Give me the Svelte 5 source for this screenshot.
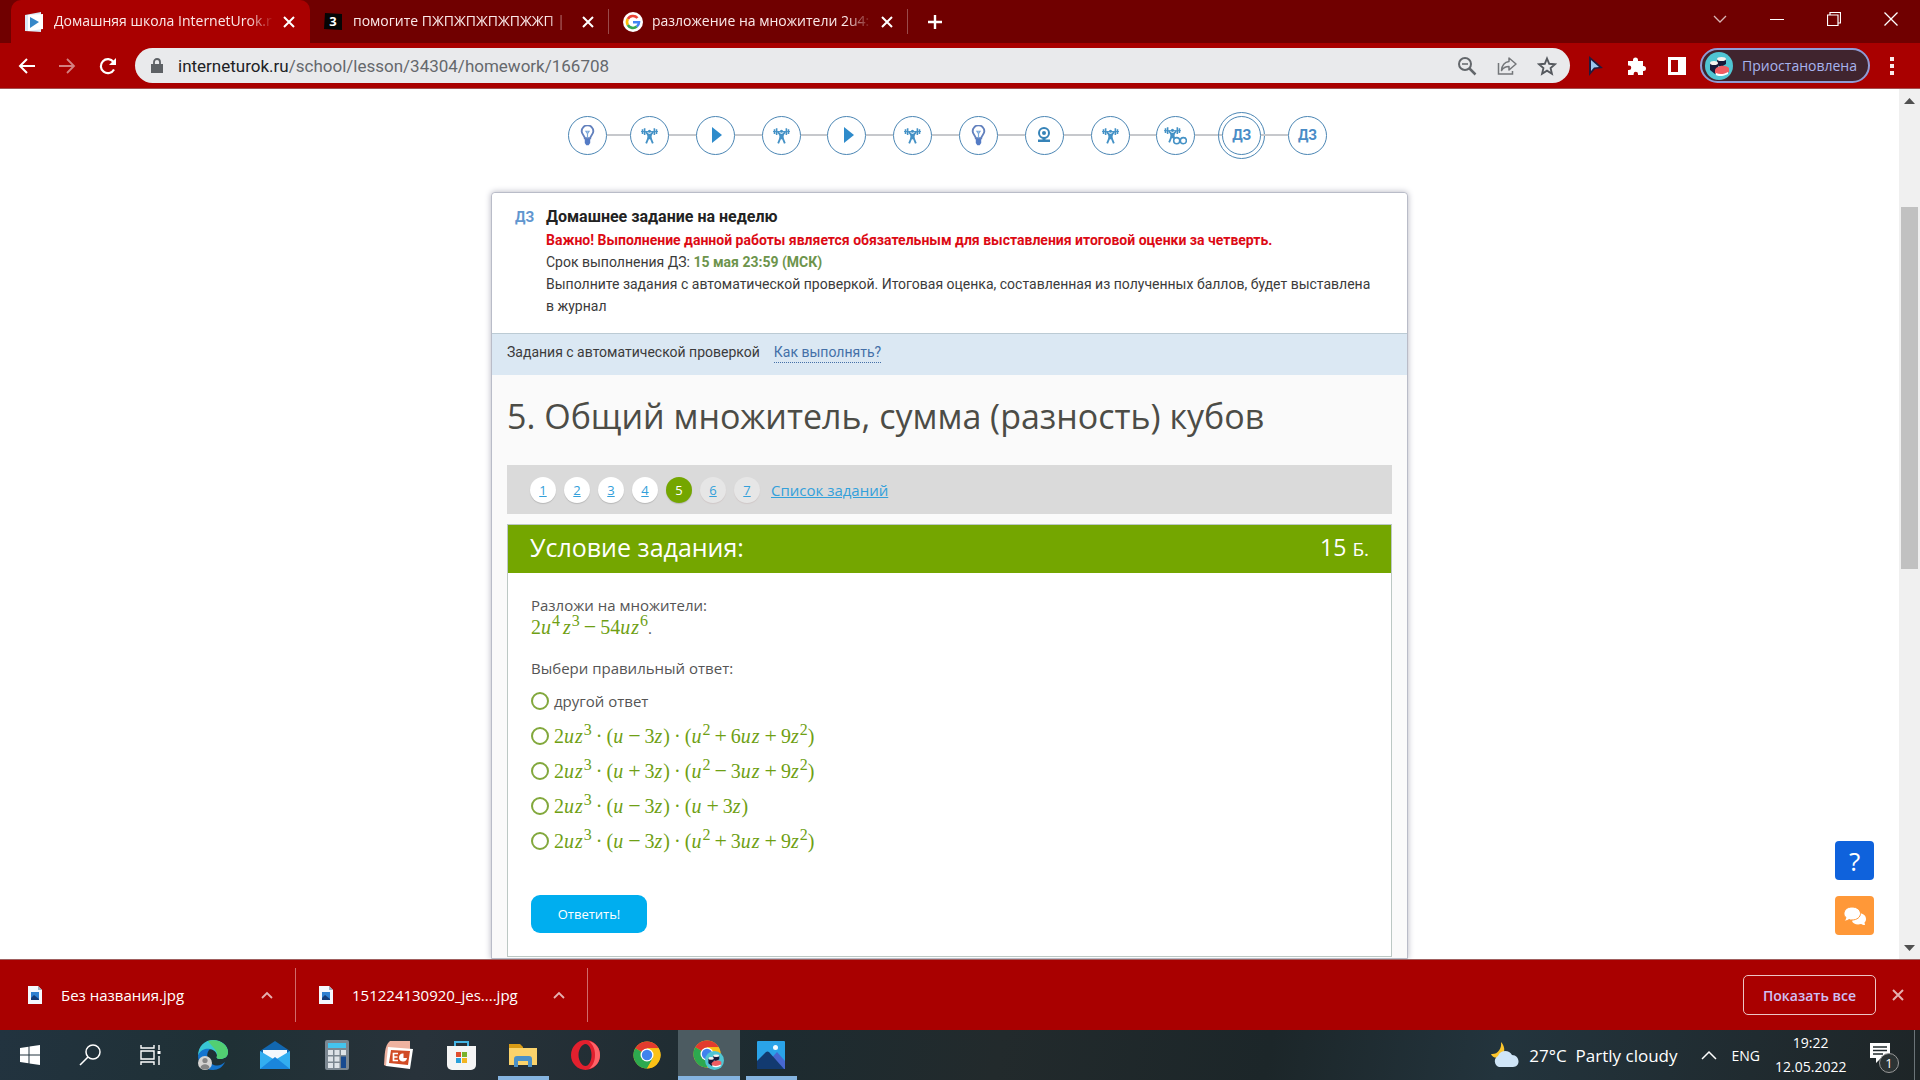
<script>
  const tabs = [
    { title: 'Домашняя школа InternetUrok.r', icon: 'play', active: true },
    { title: 'помогите ПЖПЖПЖПЖПЖЖП |', icon: 'three', active: false },
    { title: 'разложение на множители 2u4:', icon: 'google', active: false }
  ];
  const steps = ['bulb', 'gym', 'play', 'gym', 'play', 'gym', 'bulb', 'cam', 'gym', 'gymloop', 'hw-current', 'hw'];
  const tasks = [
    { n: 1, state: 'open' }, { n: 2, state: 'open' }, { n: 3, state: 'open' }, { n: 4, state: 'open' },
    { n: 5, state: 'current' }, { n: 6, state: 'faded' }, { n: 7, state: 'faded' }
  ];
  const answers = [
    '2uz^3·(u−3z)·(u^2+6uz+9z^2)',
    '2uz^3·(u+3z)·(u^2−3uz+9z^2)',
    '2uz^3·(u−3z)·(u+3z)',
    '2uz^3·(u−3z)·(u^2+3uz+9z^2)'
  ];
  const files = ['Без названия.jpg', '151224130920_jes....jpg'];
  const apps = ['edge', 'mail', 'calc', 'ppt', 'store', 'explorer', 'opera', 'chrome', 'chromeuser', 'photos'];
  const labels = {
    edge: 'Edge', mail: 'Почта', calc: 'Калькулятор', ppt: 'PowerPoint', store: 'Store',
    explorer: 'Проводник', opera: 'Opera', chrome: 'Chrome', chromeuser: 'Chrome (профиль)', photos: 'Фотографии'
  };

  // Splits a formula such as "2u^4z^3" into typed tokens.
  function tokens(src) {
    return [...src.matchAll(/\^(\d)|([a-z])|([+−])|(·)|([()])|(\d+)/g)].map((m) => {
      if (m[1]) return { k: 'sup', v: m[1] };
      if (m[2]) return { k: 'var', v: m[2] };
      if (m[3]) return { k: 'op', v: m[3] };
      if (m[4]) return { k: 'dot', v: m[4] };
      if (m[5]) return { k: 'par', v: m[5] };
      return { k: 'num', v: m[6] };
    });
  }
</script>

{#snippet math(src)}
  <span class="math">{#each tokens(src) as t}<span class={t.k}>{t.v}</span>{/each}</span>
{/snippet}

{#snippet cross()}
  <svg width="12" height="12" viewBox="0 0 12 12"><path d="M1 1l10 10M11 1L1 11" stroke="currentColor" stroke-width="2" /></svg>
{/snippet}

{#snippet lifter()}
  <path d="M2.500 3.500v8M6 2v11M22 2v11M25.500 3.500v8" stroke="#4592c6" stroke-width="2.600" />
  <path d="M0 7.500h28" stroke="#4592c6" stroke-width="1.600" />
  <circle cx="14" cy="7" r="2.600" fill="#4592c6" />
  <path d="M8 8l4 5M20 8l-4 5M12.500 17l-4 10M15.500 17l4 10" stroke="#4592c6" stroke-width="3" />
  <path d="M10 11h8l-1 9h-6z" fill="#4592c6" />
{/snippet}

{#snippet bulb()}
  <path d="M10 17c0-3-4-5-4-9a7.500 7.500 0 0 1 15 0c0 4-4 6-4 9z" fill="none" stroke="#6280bd" stroke-width="2.400" />
  <path d="M13.500 17v-6l-2-3h4l-2 3" fill="none" stroke="#7aa8da" stroke-width="1.500" />
  <path d="M10 18h7v5l-2 3h-3l-2-3z" fill="#547bc5" />
{/snippet}

{#snippet chromeLogo()}
  <circle cx="14" cy="14" r="13.500" fill="#fbc116" />
  <path d="M14 14L2.300 7.250A13.500 13.500 0 0 1 25.700 7.250H14z" fill="#e33b2e" />
  <path d="M2.300 7.250A13.500 13.500 0 0 0 14 27.500l5.800-10.200L14 14z" fill="#2da94f" />
  <path d="M14 7.250h11.700A13.500 13.500 0 0 1 14 27.500l5.800-10z" fill="#fbc116" />
  <circle cx="14" cy="14" r="6.500" fill="#fff" />
  <circle cx="14" cy="14" r="5.200" fill="#3f83ee" />
{/snippet}

{#snippet sushi()}
  <circle cx="14" cy="14" r="14" fill="#50c5d3" />
  <path d="M5 11v7l5 4 3-4v-8zM12 7v6l4 2 5-3V7z" fill="#171a3a" />
  <ellipse cx="9" cy="11" rx="4" ry="2" fill="#f6f2ee" />
  <ellipse cx="16.500" cy="7" rx="4.500" ry="2" fill="#f6f2ee" />
  <path d="M10 18c1-4 10-6 14-2v4c-4 3-10 4-14 1z" fill="#ef5d63" />
  <path d="M11 21c4 2 9 1 12-1v2c-4 2-9 3-12 1z" fill="#fff" />
{/snippet}

{#snippet fileIcon()}
  <svg width="14" height="18" viewBox="0 0 14 18">
    <path d="M0 0h10l4 4v14H0z" fill="#f4f8fd" /><path d="M10 0l4 4h-4z" fill="#9fb1c2" />
    <path d="M3 6h8v8H3z" fill="#2d7fd0" /><path d="M3 12l3-3 5 4v1H3z" fill="#123b78" />
  </svg>
{/snippet}

<div class="screen">
  <header>
    <div class="strip">
      {#each tabs as tab}
        <div class="tab" class:active={tab.active}>
          <svg class="fav" width="20" height="20" viewBox="0 0 20 20">
            {#if tab.icon === 'play'}
              <path d="M0 3L16 0v20L0 19z" fill="#d9e8f5" /><path d="M3 3L18 2v15L3 19z" fill="#fff" /><path d="M5 5l9 5-9 6z" fill="#3687c8" />
            {:else if tab.icon === 'three'}
              <path d="M1 1l17 1v16L0 17z" fill="#050505" /><text x="9" y="14" class="three">3</text>
            {:else}
              <circle cx="10" cy="10" r="10" fill="#fff" />
              <g fill="none" stroke-width="2.600">
                <path d="M14.500 6A6 6 0 0 0 4.800 7" stroke="#ea4335" /><path d="M4.800 7a6 6 0 0 0 0 6" stroke="#fbbc05" />
                <path d="M4.800 13a6 6 0 0 0 9 1.600" stroke="#34a853" /><path d="M13.800 14.600A6 6 0 0 0 16 10.200H10" stroke="#4285f4" />
              </g>
            {/if}
          </svg>
          <span class="tabtitle">{tab.title}</span>
          <button class="plain" aria-label="Закрыть вкладку">{@render cross()}</button>
        </div>
      {/each}
      <button class="plain newtab" aria-label="Новая вкладка">
        <svg width="16" height="16" viewBox="0 0 16 16"><path d="M8 1v14M1 8h14" stroke="#fff" stroke-width="2.400" /></svg>
      </button>
      <div class="winbtns">
        <button class="plain" aria-label="Поиск вкладок"><svg width="14" height="14" viewBox="0 0 14 14"><path d="M1 4l6 6 6-6" fill="none" stroke="#d9b6b6" stroke-width="1.300" /></svg></button>
        <button class="plain" aria-label="Свернуть"><svg width="14" height="14" viewBox="0 0 14 14"><path d="M0 7.500h14" stroke="#fff" /></svg></button>
        <button class="plain" aria-label="Окно"><svg width="14" height="14" viewBox="0 0 14 14"><path d="M.5 3h10.500v10.500H.5zM3 3V.5h10.500V11H11" fill="none" stroke="#fff" stroke-width="1.200" /></svg></button>
        <button class="plain" aria-label="Закрыть"><svg width="14" height="14" viewBox="0 0 14 14"><path d="M.5.5l13 13M13.500.5l-13 13" stroke="#fff" stroke-width="1.300" /></svg></button>
      </div>
    </div>

    <div class="toolbar">
      <div class="nav">
        <button class="plain" aria-label="Назад"><svg width="18" height="18" viewBox="0 0 18 18"><path d="M17 9H2M9 2L2 9l7 7" fill="none" stroke="#fff" stroke-width="2" /></svg></button>
        <button class="plain dim" aria-label="Вперёд"><svg width="18" height="18" viewBox="0 0 18 18"><path d="M1 9h15M9 2l7 7-7 7" fill="none" stroke="#fff" stroke-width="1.800" /></svg></button>
        <button class="plain" aria-label="Обновить"><svg width="20" height="18" viewBox="0 0 20 18"><path d="M16 12.500A7 7 0 1 1 15.500 5" fill="none" stroke="#fff" stroke-width="2.200" /><path d="M18 1v7h-7z" fill="#fff" /></svg></button>
      </div>
      <div class="omni">
        <svg width="12" height="16" viewBox="0 0 12 16"><path d="M0 6h12v9H0z" fill="#5d6165" /><path d="M3 7V4a3 3 0 0 1 6 0v3" fill="none" stroke="#5d6165" stroke-width="1.800" /></svg>
        <a class="url" href="#url"><b>interneturok.ru</b>/school/lesson/34304/homework/166708</a>
        <button class="plain" aria-label="Масштаб"><svg width="20" height="20" viewBox="0 0 20 20"><circle cx="8" cy="8" r="6" fill="none" stroke="#63676b" stroke-width="2" /><path d="M12.500 12.500l6 6" stroke="#63676b" stroke-width="2.500" /><path d="M5 8h6" stroke="#63676b" stroke-width="1.500" /></svg></button>
        <button class="plain" aria-label="Поделиться"><svg width="20" height="20" viewBox="0 0 20 20"><path d="M1.500 7v11h14v-3" fill="none" stroke="#74777a" stroke-width="1.500" /><path d="M12 2l7 6-7 6v-3.500C8 10.500 6 12 4.500 14.500 5 9 8 6 12 5.500z" fill="none" stroke="#74777a" stroke-width="1.500" stroke-linejoin="round" /></svg></button>
        <button class="plain" aria-label="В закладки"><svg width="20" height="20" viewBox="0 0 20 20"><path d="M10 2.500l2.200 5.300 5.800.5-4.400 3.800 1.300 5.600-4.900-3-4.900 3 1.300-5.600L2 8.300l5.800-.5z" fill="none" stroke="#55595e" stroke-width="1.900" /></svg></button>
      </div>
      <div class="exts">
        <button class="plain" aria-label="Курсор"><svg width="20" height="20" viewBox="0 0 20 20"><path d="M4 0l14 12-8 1-6 7z" fill="#241a3c" /><path d="M6 4l8 7-5 .5L6 15z" fill="#9bc7ee" /></svg></button>
        <button class="plain" aria-label="Расширения"><svg width="20" height="20" viewBox="0 0 20 20"><path d="M2 5h5V4a2.500 2.500 0 0 1 5 0v1h5v5h.5a2.500 2.500 0 0 1 0 5H17v4h-5v-1a2.200 2.200 0 0 0-4.400 0v1H2v-5h1a2.200 2.200 0 0 0 0-4.500H2z" fill="#fff" /></svg></button>
        <button class="plain" aria-label="Боковая панель"><svg width="20" height="20" viewBox="0 0 20 20"><path d="M1 1h18v18H1zM4 4v12h7V4z" fill="#fff" fill-rule="evenodd" /></svg></button>
      </div>
      <button class="profile"><svg width="28" height="28" viewBox="0 0 28 28">{@render sushi()}</svg><span>Приостановлена</span></button>
      <button class="plain menu" aria-label="Меню"><svg width="4" height="18" viewBox="0 0 4 18"><path d="M0 0h4v4H0zM0 7h4v4H0zM0 14h4v4H0z" fill="#fbeaea" /></svg></button>
    </div>
  </header>

  <div class="view">
    <main>
      <nav class="steps" aria-label="Этапы урока">
        {#each steps as s, i}
          <a href="#step{i}" class="step" class:current={s === 'hw-current'} aria-label="Этап {i + 1}">
            {#if s.startsWith('hw')}
              <span>ДЗ</span>
            {:else if s === 'bulb'}
              <svg width="21" height="21" viewBox="0 0 27 27">{@render bulb()}</svg>
            {:else if s === 'gym'}
              <svg width="17" height="17" viewBox="0 0 28 28">{@render lifter()}</svg>
            {:else if s === 'gymloop'}
              <svg width="23" height="19" viewBox="0 0 38 31">{@render lifter()}<g fill="#fff" stroke="#4592c6" stroke-width="2.500"><circle cx="21" cy="24" r="5" /><circle cx="32" cy="24" r="5" /></g></svg>
            {:else if s === 'play'}
              <svg class="shift" width="10" height="16" viewBox="0 0 10 16"><path d="M0 0l10 8-10 8z" fill="#2e8bcb" /></svg>
            {:else}
              <svg width="14" height="16" viewBox="0 0 14 16"><circle cx="7" cy="6" r="5" fill="none" stroke="#3683b8" stroke-width="2" /><circle cx="7" cy="6" r="2" fill="#3683b8" /><path d="M5.500 11h3v1.500H13V15H1v-2.500h4.500z" fill="#3683b8" /></svg>
            {/if}
          </a>
          {#if i < steps.length - 1}<span class="line"></span>{/if}
        {/each}
      </nav>

      <article class="card">
        <section class="intro">
          <span class="hwmark">ДЗ</span>
          <div>
            <h2>Домашнее задание на неделю</h2>
            <p class="warn">Важно! Выполнение данной работы является обязательным для выставления итоговой оценки за четверть.</p>
            <p>Срок выполнения ДЗ: <strong>15 мая 23:59 (МСК)</strong></p>
            <p>Выполните задания с автоматической проверкой. Итоговая оценка, составленная из полученных баллов, будет выставлена в&nbsp;журнал</p>
          </div>
        </section>
        <div class="auto"><span>Задания с автоматической проверкой</span><a href="#how">Как выполнять?</a></div>
        <section class="work">
          <h1>5. Общий множитель, сумма (разность) кубов</h1>
          <nav class="tasks" aria-label="Задания">
            {#each tasks as t}<a href="#task{t.n}" class="num-link {t.state}">{t.n}</a>{/each}
            <a class="list" href="#list">Список заданий</a>
          </nav>
          <form class="task" onsubmit={(e) => e.preventDefault()}>
            <div class="taskhead"><h3>Условие задания:</h3><span>15 <small>Б.</small></span></div>
            <div class="taskbody">
              <p>Разложи на множители:</p>
              <p class="given">{@render math('2u^4z^3−54uz^6')}.</p>
              <p class="choose">Выбери правильный ответ:</p>
              <label><input type="radio" name="answer" value="other" />другой ответ</label>
              {#each answers as a}
                <label><input type="radio" name="answer" value={a} />{@render math(a)}</label>
              {/each}
              <button class="submit">Ответить!</button>
            </div>
          </form>
        </section>
      </article>
      <div class="float">
        <button class="help">?</button>
        <button class="chat" aria-label="Чат">
          <svg width="22" height="18" viewBox="0 0 22 18"><path d="M14 6c5 0 8 2.500 8 6 0 1.500-.5 2.500-1.500 3.500L21 18c-2 0-3-.5-4-1-4 1-8 0-9-3z" fill="#fff" /><path d="M8 0c5 0 8.500 3 8.500 6.500S13 13 8 13c-1 0-2 0-3-.5-1 1-3 1.500-4.500 1.500l1.500-3.500C.5 9.500 0 8 0 6.500 0 3 3 0 8 0z" fill="#fff" stroke="#ff9838" /></svg>
        </button>
      </div>
    </main>
    <div class="scroll" aria-hidden="true">
      <svg width="11" height="6" viewBox="0 0 11 6"><path d="M0 6l5.500-6L11 6z" fill="#505050" /></svg>
      <div class="track"><div class="thumb"></div></div>
      <svg width="11" height="6" viewBox="0 0 11 6"><path d="M0 0l5.500 6L11 0z" fill="#505050" /></svg>
    </div>
  </div>

  <div class="downloads">
    {#each files as f}
      <div class="file">
        {@render fileIcon()}<a href="#file">{f}</a>
        <button class="plain" aria-label="Действия"><svg width="12" height="8" viewBox="0 0 12 8"><path d="M1 7l5-5 5 5" fill="none" stroke="#e5b0b0" stroke-width="1.800" /></svg></button>
      </div>
    {/each}
    <button class="showall">Показать все</button>
    <button class="plain closebar" aria-label="Закрыть панель">{@render cross()}</button>
  </div>

  <footer>
    <button class="plain app" aria-label="Пуск"><svg width="20" height="20" viewBox="0 0 20 20"><path d="M0 3l8.500-1.200v7.700H0zM9.500 1.600L20 0v9.500H9.500zM0 10.500h8.500v7.700L0 17zM9.500 10.500H20V20L9.500 18.400z" fill="#fff" /></svg></button>
    <button class="plain app" aria-label="Поиск"><svg width="22" height="22" viewBox="0 0 22 22"><circle cx="14" cy="8" r="7" fill="none" stroke="#fff" stroke-width="1.500" /><path d="M9 13l-8 8" stroke="#fff" stroke-width="1.600" /></svg></button>
    <button class="plain app" aria-label="Задачи"><svg width="22" height="20" viewBox="0 0 22 20"><path d="M1 0v3h13V0M1 20v-3h13v3M1 6h13v8H1zM19 0v5M19 11v9" fill="none" stroke="#fff" stroke-width="1.400" /><path d="M17.500 6h3v3h-3z" fill="#fff" /></svg></button>
    {#each apps as app}
      <button class="plain app" class:wide={app === 'chromeuser'} class:running={app === 'explorer' || app === 'photos'} aria-label={labels[app]}>
        {#if app === 'edge'}
          <svg width="30" height="30" viewBox="0 0 30 30">
            <path d="M0 16C0 6 7 0 15 0c9 0 15 6 15 12 0 5-4 7-8 7-3 0-4-1-3-3 0-4-4-7-8-7-5 0-9 3-11 7z" fill="#39c6d4" />
            <path d="M10 1c11-3 20 4 20 11 0 5-4 7-8 7-3 0-4-1-3-3 1-6-5-9-9-15z" fill="#52cf72" />
            <path d="M0 16C2 10 7 8 12 9c-4 3-4 12 2 15 5 3 10 1 13-2-2 5-7 8-12 8C6 30 0 23 0 16z" fill="#1474cf" />
            <circle cx="7" cy="23" r="7" fill="#d6d4d2" /><circle cx="7" cy="20.500" r="2.600" fill="#858585" /><path d="M2.500 28c0-5 9-5 9 0a8 8 0 0 1-9 0z" fill="#858585" />
          </svg>
        {:else if app === 'mail'}
          <svg width="30" height="28" viewBox="0 0 30 28"><path d="M0 10L15 0l15 10v4H0z" fill="#1267b0" /><path d="M3 9h24v11H3z" fill="#f5f9fd" /><path d="M0 10l15 9 15-9v18H0z" fill="#33aef0" /><path d="M0 28l15-12 15 12z" fill="#1a86dc" /></svg>
        {:else if app === 'calc'}
          <svg width="24" height="30" viewBox="0 0 24 30"><rect width="24" height="30" rx="2" fill="#7b8791" /><path d="M3 3h18v5H3z" fill="#44c4ee" /><path d="M3 10h5v5H3zM9.500 10h5v5h-5zM16 10h5v5h-5zM3 16.500h5v5H3zM9.500 16.500h5v5h-5zM3 23h5v5H3zM9.500 23h5v5h-5z" fill="#dde3e8" /><path d="M16 16.500h5V28h-5z" fill="#174a90" /></svg>
        {:else if app === 'ppt'}
          <svg width="30" height="28" viewBox="0 0 30 28"><path d="M6 0h20v10L2 25 0 24C1 14 0 5 6 0z" fill="#eeb2a0" /><path d="M4 6l25 2-3 20-24-3z" fill="#fff" /><path d="M7 9l19 1-2 14-19-2z" fill="#d14b25" /><path d="M14 12.500H9.500v7H14M9.500 16h4" fill="none" stroke="#fff" stroke-width="1.700" /><path d="M19.500 12.500a4 4 0 1 0 3.500 4.500h-3.500z" fill="#fff" /></svg>
        {:else if app === 'store'}
          <svg width="29" height="30" viewBox="0 0 29 30"><path d="M8 7V2h13v5" fill="none" stroke="#45b4e4" stroke-width="2" /><path d="M0 6h29v19a5 5 0 0 1-5 5H5a5 5 0 0 1-5-5z" fill="#f5f5f5" /><path d="M9 12h5v5H9z" fill="#e04e2e" /><path d="M15 12h5v5h-5z" fill="#79b22b" /><path d="M9 18h5v5H9z" fill="#2aa0da" /><path d="M15 18h5v5h-5z" fill="#f2b420" /></svg>
        {:else if app === 'explorer'}
          <svg width="28" height="24" viewBox="0 0 28 24"><path d="M0 1h11l3 3v6H0z" fill="#d99b15" /><path d="M0 5h28v17H0z" fill="#fbd36b" /><path d="M5 24v-8a3 3 0 0 1 3-3h12a3 3 0 0 1 3 3v8h-4v-6H9v6z" fill="#4b91c8" /></svg>
        {:else if app === 'opera'}
          <svg width="29" height="30" viewBox="0 0 29 30"><path d="M14.500 0a14.500 15 0 1 0 0 30a14.500 15 0 1 0 0-30zm0 4c3.500 0 6 5 6 11s-2.500 11-6 11-7-5-7-11 3.500-11 7-11z" fill="#e2202e" fill-rule="evenodd" /><path d="M18 1c7 2 11 7 11 14s-4 12-11 14c4-4 6-8 6-14s-2-10-6-14z" fill="#ff6368" /></svg>
        {:else if app === 'chrome'}
          <svg width="28" height="28" viewBox="0 0 28 28">{@render chromeLogo()}</svg>
        {:else if app === 'chromeuser'}
          <svg width="32" height="31" viewBox="0 0 32 31">{@render chromeLogo()}<svg x="12" y="11" width="19" height="19" viewBox="0 0 28 28">{@render sushi()}</svg></svg>
        {:else}
          <svg width="28" height="28" viewBox="0 0 28 28"><rect width="28" height="28" rx="1" fill="#2aa3e8" /><path d="M12 20l8-9 8 9v8H12z" fill="#4767cf" /><path d="M0 20l9-9q1.500-1 3 0l15 17H0z" fill="#123a70" /><circle cx="18.500" cy="6.500" r="2.500" fill="#f3fbff" /></svg>
        {/if}
      </button>
    {/each}
    <div class="tray">
      <svg width="28" height="26" viewBox="0 0 28 26"><path d="M10 0c5 5 4 13-1 15-4 2-8 0-9-3 6 1 11-5 10-12z" fill="#fbc52c" /><path d="M8 25a6 6 0 0 1-1-11c2-6 11-7 14-1 8 0 9 12 1 12z" fill="#cfe5f7" /></svg>
      <span class="weather">27°C&nbsp; Partly cloudy</span>
      <svg class="up" width="16" height="10" viewBox="0 0 16 10"><path d="M1 9l7-7 7 7" fill="none" stroke="#fff" stroke-width="1.500" /></svg>
      <span class="lang">ENG</span>
      <div class="clock"><span>19:22</span><span>12.05.2022</span></div>
      <div class="notes">
        <svg width="20" height="20" viewBox="0 0 20 20"><path d="M0 0h20v15h-9l-5 5v-5H0z" fill="#fff" /><path d="M3 4h14M3 7.500h14M3 11h10" stroke="#222b2e" stroke-width="1.300" /></svg>
        <span class="badge">1</span>
      </div>
      <span class="peek"></span>
    </div>
  </footer>
</div>

<style>
  :global(body) { margin: 0; }
  * { box-sizing: border-box; }
  h1, h2, h3, p { margin: 0; font-weight: 400; }
  svg { display: block; flex: none; }
  .screen { display: flex; flex-direction: column; height: 100vh; font-family: 'Open Sans', 'Noto Sans', sans-serif; overflow: hidden; }
  .plain { border: 0; padding: 0; background: none; color: #fff; display: flex; align-items: center; justify-content: center; }

  .strip { display: flex; align-items: stretch; height: 43px; padding-left: 11px; background: #700000; }
  .tab { display: flex; align-items: center; width: 299px; padding: 0 14px; gap: 9px; color: #fbe9e9; border-right: 1px solid transparent; font-size: 14px; }
  .tab.active { background: #a90000; border-radius: 10px 10px 0 0; }
  .tab:not(.active) { border-image: linear-gradient(transparent 22%, #9a4a4a 22%, #9a4a4a 78%, transparent 78%) 1; }
  .tabtitle { flex: 1; padding-bottom: 2px; white-space: nowrap; mask-image: linear-gradient(90deg, #000 88%, transparent); }
  .three { fill: #fff; font: bold 13px 'Open Sans', sans-serif; text-anchor: middle; }
  .newtab { width: 54px; }
  .winbtns { margin-left: auto; display: flex; padding-bottom: 6px; padding-right: 1px; }
  .winbtns .plain { width: 57px; }

  .toolbar { display: flex; align-items: center; height: 46px; background: #a90000; border-bottom: 1px solid #a35050; padding-right: 26px; }
  .nav { display: flex; width: 135px; padding-left: 18px; gap: 22px; }
  .dim { opacity: .5; }
  .omni { flex: 1; display: flex; align-items: center; height: 35px; gap: 20px; padding: 0 13px 0 16px; border-radius: 18px; background: #e9eaec; }
  .url { flex: 1; font-family: Roboto, sans-serif; font-size: 17px; color: #65686c; text-decoration: none; margin-left: -5px; }
  .url b { font-weight: 400; color: #202124; }
  .exts { display: flex; gap: 21px; padding: 0 13px 0 15px; }
  .profile { display: flex; align-items: center; gap: 9px; height: 35px; width: 170px; padding: 0 3px; border: 2px solid #8f9bd5; border-radius: 18px; background: #40242e; color: #a7b4ef; font: 14px 'Open Sans', sans-serif; }
  .menu { margin-left: 20px; }

  .view { flex: 1; min-height: 0; display: flex; background: #fff; }
  main { flex: 1; position: relative; overflow: hidden; display: flex; flex-direction: column; align-items: center; padding-top: 23px; }
  .steps { display: flex; align-items: center; width: 763px; height: 46px; margin-bottom: 34px; padding-right: 4px; }
  .step { flex: none; display: flex; align-items: center; justify-content: center; width: 39px; height: 39px; border: 1px solid #4b86b4; border-radius: 50%; text-decoration: none; color: #4a8cc6; font: bold 14px Roboto, sans-serif; }
  .step.current { outline: 1px solid #4b86b4; outline-offset: 3px; }
  .shift { margin-left: 4px; }
  .line { flex: 1; height: 2px; background: #c6c8cc; }
  .line:nth-child(2) { flex: 0 0 23px; }

  .card { flex: 1; width: 100%; max-width: 917px; border: 1px solid #b9bcc8; border-radius: 4px 4px 0 0; background: #fafafa; box-shadow: 0 0 6px #b4b4c0; font-family: Roboto, 'Noto Sans', sans-serif; }
  .intro { display: flex; padding: 12px 36px 16px 23px; border-bottom: 1px solid #bccbd4; background: #fff; border-radius: 4px 4px 0 0; font-size: 14px; line-height: 22px; color: #3b3b3b; }
  .hwmark { width: 31px; flex: none; font-weight: 700; font-size: 14px; line-height: 24px; color: #6196cf; }
  .intro h2 { font-size: 16px; line-height: 24px; font-weight: 700; color: #222; }
  .warn { font-weight: 700; color: #dc0a14; }
  .intro strong { color: #6d944c; }
  .auto { display: flex; align-items: center; gap: 14px; height: 41px; padding: 0 15px 4px; background: #dbe8f3; font-size: 14px; line-height: 19px; color: #3b3b3b; }
  .auto a { color: #4470a8; text-decoration: none; border-bottom: 1px dotted #4470a8; }
  .work { padding: 17px 15px 0; font-family: 'Open Sans', sans-serif; }
  h1 { font-size: 34px; line-height: 48px; color: #4c4c46; margin-bottom: 25px; }
  .tasks { display: flex; align-items: center; gap: 8px; height: 49px; padding: 0 23px; background: #dadada; margin-bottom: 10px; }
  .num-link { display: flex; align-items: center; justify-content: center; width: 26px; height: 26px; border-radius: 50%; background: #fff; color: #33a0da; font-size: 13px; box-shadow: 0 1px 1px #b8b8b8; }
  .current.num-link { background: #74a600; color: #fff; text-decoration: none; }
  .faded { background: #e6e6e6; box-shadow: 0 1px 1px #d0c8c8; }
  .list { margin-left: 3px; color: #33a0da; font-size: 15px; }
  .task { border: 1px solid #bcc8c4; background: #fff; color: #555; font-size: 15px; }
  .taskhead { display: flex; align-items: center; justify-content: space-between; height: 48px; padding: 0 22px 5px; background: #74a600; color: #fff; }
  h3 { font-size: 25px; }
  .taskhead span { font-size: 23px; }
  .taskhead small { font-size: 19px; }
  .taskbody { padding: 21px 23px 23px; line-height: 22px; }
  .given { height: 22px; }
  .choose { margin: 19px 0 4px; }
  label { display: flex; align-items: center; gap: 5px; height: 35px; }
  input { appearance: none; margin: 0; width: 18px; height: 18px; border: 2px solid #82a83c; border-radius: 50%; }
  .math { font-family: 'Liberation Serif', serif; font-size: 20px; color: #6f9f14; white-space: nowrap; line-height: 22px; }
  .var { font-style: italic; margin-right: 1px; }
  .sup { font-size: 16px; position: relative; bottom: 8px; line-height: 0; }
  .sup + .var { margin-left: 3px; }
  .op { margin: 0 4px; font-size: 22px; line-height: 0; }
  .dot { margin: 0 4px; }
  .submit { display: block; margin-top: 37px; width: 116px; height: 38px; border: 0; border-radius: 9px; background: #00aeef; color: #fff; font: 13px 'Open Sans', sans-serif; }
  .float { position: absolute; right: 25px; bottom: 24px; display: grid; gap: 16px; }
  .float button { display: flex; align-items: center; justify-content: center; width: 39px; height: 39px; border: 0; padding: 0; border-radius: 4px; color: #fff; font: 26px 'Open Sans', sans-serif; }
  .help { background: #0f62dc; }
  .chat { background: #ff9838; }

  .scroll { display: flex; flex-direction: column; align-items: center; width: 21px; padding: 9px 0 8px; background: #f0f0f0; }
  .track { flex: 1; align-self: stretch; padding: 0 2px; }
  .thumb { margin-top: 103px; height: 43%; background: #c1c1c1; }

  .downloads { display: flex; align-items: center; height: 71px; background: #a90000; border-top: 1px solid #a06060; color: #fff; }
  .file { display: flex; align-items: center; width: 296px; height: 54px; padding: 0 22px 0 28px; border-right: 1px solid #d06a6a; }
  .file + .file { width: 292px; padding-left: 23px; }
  .file a { flex: 1; margin-left: 19px; color: #fff; text-decoration: none; font-size: 15px; white-space: nowrap; }
  .showall { margin-left: auto; width: 133px; height: 40px; border: 1px solid #ecc5c5; border-radius: 5px; background: none; color: #cfc0f5; font: 600 14px 'Open Sans', sans-serif; }
  .closebar { margin: 0 16px; color: #e5b0b0; }

  footer { display: flex; height: 50px; background: linear-gradient(100deg, #22333f, #1f3035 12%, #28323a 22%, #1d2b30 40%, #222a2c 52%, #1c2629 66%, #23343d 78%, #1e2527); color: #fff; }
  .app { width: 62px; }
  .app:nth-child(1) { width: 60px; }
  .app:nth-child(2) { width: 60px; }
  .wide { background: #4c5b61; border-bottom: 4px solid #85b4e0; padding-top: 4px; }
  .running { background: linear-gradient(#85b4e0, #85b4e0) center bottom / 51px 4px no-repeat; }
  .tray { margin-left: auto; display: flex; align-items: center; padding-right: 5px; white-space: nowrap; }
  .weather { margin: 0 23px 0 10px; font-size: 17px; }
  .up { margin-right: 15px; }
  .lang { font-size: 14px; margin-right: 15px; }
  .clock { display: grid; text-align: center; font-size: 14px; line-height: 24px; margin-right: 24px; width: 71px; justify-items: center; }
  .notes { position: relative; width: 28px; height: 24px; }
  .peek { align-self: stretch; width: 1px; margin-left: 16px; background: #6b7478; }
  .badge { position: absolute; left: 9px; top: 10px; width: 20px; height: 20px; border: 1px solid #999; border-radius: 50%; background: #2c3334; font-size: 13px; line-height: 18px; text-align: center; }
</style>
